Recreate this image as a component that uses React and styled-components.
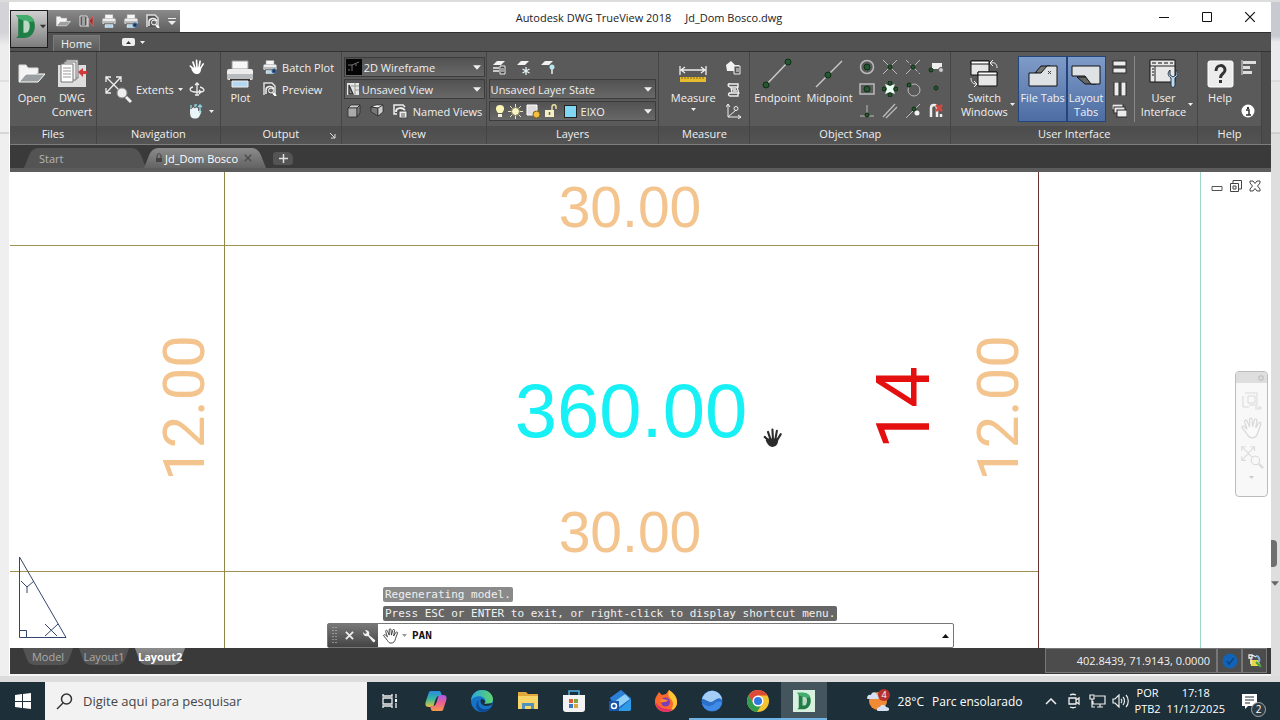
import React from "react";
import styled, { createGlobalStyle, css } from "styled-components";

/* ---------- icons ---------- */

const Svg = ({ w = 16, h = w, box, children }) => (
    <svg width={w} height={h} viewBox={box || `0 0 ${w} ${h}`} fill="none" aria-hidden="true">
        {children}
    </svg>
);

const Caret = ({ color = "#eee", w = 8 }) => (
    <Svg w={w} h={5} box="0 0 9 5">
        <path d="M0 0h9L4.500 5z" fill={color} />
    </Svg>
);

const LogoIcon = ({ size = 24 }) => (
    <Svg w={size} box="0 0 24 24">
        <path d="M3 1h8c7 0 10 5 10 10.500S18 23 10 23H3l2-2V4z" fill="#1f7d45" />
        <path d="M10 6h2c3 0 4 2.500 4 5.500S15 18 12 18h-2z" fill="#b9d9c4" />
        <path d="M3 1h8c5 0 8 2 9.500 6L15 8c-1-1.500-2-2-4-2H9L5 4z" fill="#43ad6d" />
    </Svg>
);

const FolderIcon = ({ w = 28, h = 20 }) => (
    <Svg w={w} h={h} box="0 0 28 20">
        <path d="M1 18V1h7l2 3h10v5" fill="#f4f4f4" stroke="#ddd" />
        <path d="M1 18 8 10h19l-7 8z" fill="#9aa0a2" stroke="#fff" />
    </Svg>
);

const ConvertIcon = ({ w = 30 }) => (
    <Svg w={w} box="0 0 30 30">
        <path d="M1 6h28v22H1z" fill="#dedede" />
        <path d="M9 1h12v18H9z" fill="#eee" stroke="#777" />
        <path d="M7 3h12v18H7z" fill="#eee" stroke="#777" />
        <path d="M4 5h12v18H4z" fill="#fff" stroke="#777" />
        <path d="M6 9h8M6 12h8M6 15h8M6 18h8" stroke="#999" />
        <path d="m21 13 5-4v3h4v3h-4v3z" fill="#d23a3a" />
    </Svg>
);

const ConvertSmallIcon = () => (
    <Svg w={15} h={14}>
        <path d="M1 2h7v10H1z" fill="#555" stroke="#ddd" />
        <path d="M3 4h3M3 6h3M3 8h3M3 10h3M9 4v9" stroke="#eee" />
        <path d="m10 7 4-5v10z" fill="#9d2b2b" stroke="#c66" />
    </Svg>
);

const PrinterIcon = ({ w = 28, h = w, batch }) => (
    <Svg w={w} h={h} box="0 0 28 28">
        <path d="M6 9V1h16v8z" fill="#f7f7f7" stroke="#999" />
        <rect x="1" y="9" width="26" height="11" rx="2" fill="#ededed" />
        <path d="M1 14h26v5H1z" fill="#b9bcbe" />
        <path d="M4 19h20v2H4z" fill="#333" />
        <path d="M6 21h16v6H6z" fill="#b4d8ef" stroke="#eee" />
        {batch && (
            <g>
                <circle cx="22" cy="22" r="5" fill="#3b6ea8" />
                <path d="M22 19v6M19 22h6" stroke="#223" strokeWidth="2" />
            </g>
        )}
    </Svg>
);

const PreviewIcon = () => (
    <Svg w={14} h={14}>
        <path d="M1 13V1h8l3 3v9" stroke="#ddd" fill="#555" strokeWidth="1.500" />
        <path d="M3 12V8c0-4 6-5 8-1" stroke="#eee" strokeWidth="1.500" />
        <circle cx="8" cy="8.500" r="2.500" fill="#666" stroke="#fff" />
        <path d="m10 11 3 3" stroke="#fff" strokeWidth="2" />
    </Svg>
);

const ExtentsIcon = ({ size = 28, color = "#eee", lens = color, edge = "#888" }) => (
    <Svg w={size} box="0 0 28 28">
        <path d="M2 2 16 16M17 2 2 18M2 7V2h5M12 2h5v5M2 13v5h5" stroke={color} strokeWidth="1.300" />
        <circle cx="18" cy="18" r="5" fill={lens} stroke={edge} />
        <path d="m22 22 5 5" stroke={color} strokeWidth="3" />
    </Svg>
);

const HandIcon = ({ size = 16, fill = "#fff" }) => (
    <Svg w={size} box="0 0 18 18">
        <path d="M7 13 1.500 8M7 11 4.500 3.500M9 11 8.500 1.500M11 11l1.500-8.500M12 12l4-6.500" stroke={fill} strokeWidth="1.900" strokeLinecap="round" />
        <path d="M4 9.500h9.500c.5 3-.5 7.500-5 7.500-3 0-5-3-6-6z" fill={fill} />
    </Svg>
);

const OpenHandIcon = ({ size = 16, fill = "#fff", stroke = "#333" }) => (
    <Svg w={size} box="0 0 18 18">
        <path
            d="M5 14 1 9c-1-1.500 1-2 2-1l2 2-2-6c-.5-1.500 1.500-2 2-.6L7 8V2c0-1.500 2-1.500 2 0l.5 6L11 2.500c.4-1.500 2.300-1 2 .4L12 9l2.500-4c.8-1.200 2.300-.3 1.800.8L14 12c-.6 3-2 5-5 5-2 0-3-1-4-3z"
            fill={fill}
            stroke={stroke}
        />
    </Svg>
);

const OrbitIcon = () => (
    <Svg w={16} h={14}>
        <path d="M8 1v12M6 3l2-2 2 2M4 5C0 6 0 9 5 10h7c5-1 3-4-1-5M10 8l2 2-2 2M6 13h4" stroke="#eee" strokeWidth="1.300" />
    </Svg>
);

const ViewHandIcon = () => (
    <Svg w={15} h={16}>
        <path d="M1 7c0-2 2-2 2 0V6c0-2 3-2 3 0 0-2 3-2 3 0v2c3-1 4 0 3 2l-2 4c-2 2-6 2-8 0-1-2-1-4-1-7z" fill="#e9f5f8" />
        <path d="M11 10V2M9 4l2-2 2 2M2 5V2M6 4V2h2" stroke="#8ed0df" strokeWidth="1.400" />
    </Svg>
);

const WireframeIcon = () => (
    <Svg w={16} h={16}>
        <path d="M0 0h16v16H0z" fill="#050505" />
        <path d="M2 6h4l7-3M6 6v6M10 5v2M2 11h2" stroke="#777" />
    </Svg>
);

const ViewDocIcon = () => (
    <Svg w={14} h={14}>
        <path d="M1 1h12v12H1z" fill="#e5e5e5" />
        <path d="m3 3 4 9H3z" fill="#888" stroke="#333" strokeWidth="1.300" />
        <path d="M9 1v12M5 4h8M9 8h4" stroke="#999" />
    </Svg>
);

const BoxIcon = ({ side }) => (
    <Svg w={14} h={14}>
        {side ? (
            <g stroke="#222" strokeWidth=".7">
                <path d="M1 3 6 1h7L8 4z" fill="#fff" />
                <path d="m1 3 7 1v8L1 8z" fill="#777" />
                <path d="m8 4 5-3v7l-5 4z" fill="#ccc" />
            </g>
        ) : (
            <g stroke="#222" strokeWidth=".7">
                <path d="m1 4 3-3h9l-3 3z" fill="#ccc" />
                <path d="M1 4h9v9H1z" fill="#aaa" />
                <path d="m10 4 3-3v8l-3 4z" fill="#777" />
            </g>
        )}
    </Svg>
);

const NamedViewsIcon = () => (
    <Svg w={15} h={15}>
        <path d="M4 10H1V1h9l2 2" stroke="#eee" strokeWidth="1.500" />
        <path d="M3 8c0-5 7-5 9-1" stroke="#eee" strokeWidth="2" />
        <path d="M6 7h8v7H6z" fill="#eee" stroke="#444" />
        <path d="M8 10h4M8 12h4" stroke="#555" />
    </Svg>
);

const LayerIcon = ({ kind }) => (
    <Svg w={15} h={15}>
        <path d="m1 5 4-4h8L9 5z" fill="#f2f2f2" />
        {kind === "props" && <path d="M1 8h6M1 11h6" stroke="#eee" strokeWidth="1.500" />}
        {kind === "props" && <path d="M8 6h5v8H8zM9 9h3M9 11h3" stroke="#eee" fill="#444" />}
        {kind === "freeze" && <path d="M10 7v8M6.500 9l7 4M13.500 9l-7 4" stroke="#e5f2f5" strokeWidth="1.300" />}
        {kind === "off" && <circle cx="12" cy="7" r="2.500" fill="#b9e5ee" />}
        {kind === "off" && <path d="M12 9v5" stroke="#eee" strokeWidth="1.500" />}
    </Svg>
);

const BulbIcon = () => (
    <Svg w={10} h={15}>
        <path d="M5 1c5 0 5 5 2 8H3C0 6 0 1 5 1z" fill="#fbf6b4" />
        <path d="M3 10h4v3H3z" fill="#f1eeda" />
    </Svg>
);

const SunIcon = () => (
    <Svg w={15} h={15}>
        <path d="M7.500 0v15M0 7.500h15M2 2l11 11M13 2 2 13" stroke="#e9e4b6" />
        <circle cx="7.500" cy="7.500" r="4" fill="#f7f3c7" stroke="#7d7b56" />
    </Svg>
);

const ViewportSunIcon = () => (
    <Svg w={15} h={15}>
        <path d="M1 1h10v10H1z" fill="#ddd" stroke="#fff" />
        <circle cx="10.500" cy="10.500" r="3.500" fill="#f3bf3c" stroke="#7a5d1e" />
    </Svg>
);

const UnlockIcon = () => (
    <Svg w={14} h={14}>
        <path d="M8 6V3c0-3 4-3 4 0v2" stroke="#e8dfa5" strokeWidth="1.500" />
        <path d="M1 6h9v7H1z" fill="#f5efc3" />
        <path d="M5.500 8v3" stroke="#665" strokeWidth="1.500" />
    </Svg>
);

const MeasureIcon = () => (
    <Svg w={30} h={30}>
        <path d="M2 7v9M28 7v9M3 11h24M7 8l-4 3 4 3M23 8l4 3-4 3" stroke="#eee" strokeWidth="1.300" />
        <path d="M2 18h26v5H2z" fill="#e6bd2f" />
        <path d="M4 18v2M7 18v2M10 18v2M13 18v2M16 18v2M19 18v2M22 18v2M25 18v2" stroke="#8a6b10" />
    </Svg>
);

const MeasureToolIcon = ({ kind }) => (
    <Svg w={15} h={15}>
        {kind === "id" && <path d="M0 5 5 1l4 4h4v1H9v5H1z" fill="#f2f2f2" />}
        {kind === "id" && <path d="M8 6h6v8H8zM10 9h3M10 11h3" fill="#555" stroke="#eee" />}
        {kind === "list" && (
            <path d="M2 2h10v3H4c-3-1-2-4 0-3M5 5l1 6M11 5l2 7M3 11h9v3H4c-2-1-2-3 0-3M6 7h4M7 9h4" stroke="#eee" strokeWidth="1.400" />
        )}
        {kind === "point" && <path d="M2 0v13h13M2 13l8-7M0 3l2-3 2 3M12 11l3 2-3 2" stroke="#eee" />}
        {kind === "point" && <circle cx="10" cy="4.500" r="2" stroke="#eee" />}
    </Svg>
);

const Node = ({ x, y, r = 2 }) => <circle cx={x} cy={y} r={r} fill="#25562f" stroke="#0d2e15" />;

const EndpointIcon = () => (
    <Svg w={32} h={32}>
        <path d="M5 27 27 4" stroke="#c8c8c8" strokeWidth="1.500" />
        <Node x={5} y={27} r={3} />
        <Node x={27} y={4} r={3} />
    </Svg>
);

const MidpointIcon = () => (
    <Svg w={32} h={32}>
        <path d="M3 29 29 3" stroke="#c8c8c8" strokeWidth="1.500" />
        <Node x={15} y={17} r={3} />
    </Svg>
);

const snapShapes = {
    center: <><circle cx="8" cy="8" r="6.500" stroke="#bbb" strokeWidth="1.500" /><Node x={8} y={8} r={3} /></>,
    intersection: <><path d="m1 1 14 14M15 1 1 15" stroke="#bbb" /><Node x={8} y={8} /></>,
    apparent: <><path d="m1 1 14 14" stroke="#bbb" strokeDasharray="4 2" /><path d="M15 1 1 15" stroke="#bbb" /><Node x={8} y={8} /></>,
    insert: <><path d="M4 4h10v6H4z" fill="#eee" /><Node x={3} y={11} /><circle cx="13" cy="11" r="2.500" fill="#ccc" stroke="#555" /></>,
    geometric: <><path d="M1 3h14v10H1z" stroke="#bbb" strokeWidth="1.500" /><Node x={8} y={8} r={3} /></>,
    quadrant: <><path d="m3 3 5 2 5-2-2 5 2 5-5-2-5 2 2-5z" fill="#e6fff0" /><Node x={8} y={2} /><Node x={8} y={14} /><Node x={2} y={8} /><Node x={14} y={8} /></>,
    tangent: <><circle cx="9" cy="9" r="6" stroke="#bbb" /><Node x={4} y={4} /></>,
    node: <Node x={8} y={7} />,
    perpendicular: <><path d="M1 13h14M8 2v11" stroke="#bbb" /><Node x={8} y={12} /></>,
    parallel: <path d="M1 14 13 1M4 15 15 4" stroke="#bbb" strokeWidth="1.300" />,
    nearest: <><path d="M1 15 15 1" stroke="#bbb" /><Node x={9} y={6} /><circle cx="12" cy="10" r="2.500" fill="#f2f2f2" /></>,
    none: <><path d="M3 14V5c0-4 6-4 6 0v9M13 14v-3" stroke="#eee" strokeWidth="2.500" /><path d="m8 2 6 6M14 2 8 8" stroke="#d04a40" strokeWidth="2.500" /></>,
};

const SnapIcon = ({ kind }) => <Svg w={16}>{snapShapes[kind]}</Svg>;

const SwitchIcon = () => (
    <Svg w={30} h={30}>
        <path d="M2 2h18v14H2z" fill="#e6e6e6" stroke="#111" />
        <path d="M2 2h18v3H2z" fill="#fff" stroke="#111" />
        <path d="M9 13h19v14H9z" fill="#e6e6e6" stroke="#111" />
        <path d="M9 13h19v3H9z" fill="#fff" stroke="#111" />
        <path d="M22 4c4-1 6 1 6 5M24 1l-3 3 3 3M2 19c0 4 2 6 5 6M5 22l3 3-3 3" stroke="#eee" />
    </Svg>
);

const FileTabIcon = () => (
    <Svg w={30} h={30}>
        <path d="M7 14 13 7h9l-6 8z" fill="#777" stroke="#111" />
        <path d="M1 27V14h12l6-7h10v20z" fill="#dfe2e5" stroke="#111" />
        <path d="m20 12 3 3M23 12l-3 3" stroke="#444" />
    </Svg>
);

const LayoutTabIcon = () => (
    <Svg w={30} h={30}>
        <path d="M6 18 14 25h11l3-7z" fill="#666" stroke="#111" />
        <path d="M1 7h28v18h-9l-6-8H1z" fill="#dfe2e5" stroke="#111" />
    </Svg>
);

const tileRects = {
    horizontal: [[1, 1, 13, 5], [1, 8, 13, 5]],
    vertical: [[2, 0, 5, 14], [9, 0, 5, 14]],
    cascade: [[0, 0, 11, 6], [2, 3, 11, 6], [5, 6, 10, 7]],
};

const TileIcon = ({ kind }) => (
    <Svg w={15} h={14}>
        {tileRects[kind].map(([x, y, w, h]) => (
            <rect key={`${x}-${y}`} x={x} y={y} width={w} height={h} fill="#ececec" stroke="#2a2a2a" />
        ))}
    </Svg>
);

const InterfaceIcon = () => (
    <Svg w={30} h={30}>
        <path d="M2 1h25v22H2z" fill="#e8e8e8" stroke="#111" />
        <path d="M2 7h25M7 7v16" stroke="#222" />
        <path d="M4 4h4M10 4h4M16 4h4M22 4h3M4 10h2M4 13h2M4 16h2" stroke="#555" strokeWidth="1.300" />
        <path d="M22 11v5l3 2 3-2v-5c3 3 2 6-1 8v7c0 3-4 3-4 0v-7c-3-2-4-5-1-8z" fill="#bcdcf3" stroke="#234" />
    </Svg>
);

const HelpIcon = () => (
    <Svg w={28} h={28}>
        <rect x="2" y="1" width="25" height="26" rx="2" fill="#ececec" stroke="#fff" />
        <path d="M10 11c0-7 9-7 9-1 0 4-4.500 3-4.500 8" stroke="#333" strokeWidth="3" />
        <path d="M13 20h3v3h-3z" fill="#333" />
    </Svg>
);

const InfoIcon = () => (
    <Svg w={14} h={14}>
        <circle cx="7" cy="7" r="6.500" fill="#fff" />
        <path d="M5 6h3v5M5 11h5" stroke="#333" strokeWidth="1.500" />
        <path d="M6 3h2v2H6z" fill="#333" />
    </Svg>
);

const BarsIcon = () => (
    <Svg w={15} h={15}>
        <path d="M1 0v15" stroke="#ddd" />
        <path d="M2 1h13v3H2zM2 6h7v3H2zM2 11h9v3H2z" fill="#ddd" />
    </Svg>
);

const WrenchIcon = () => (
    <Svg w={14} h={14}>
        <path d="M1 3c0 4 3 5 5 4l5 6c1 1 3-1 2-2L7 6c1-2 0-5-4-5l2 3-2 1z" fill="#f2f2f2" />
    </Svg>
);

const LockIcon = () => (
    <Svg w={8} h={10}>
        <path d="M2 5V3c0-3 4-3 4 0v2" stroke="#444" />
        <path d="M1 5h6v4H1z" fill="#444" />
    </Svg>
);

const Cross = ({ size = 10, color = "#eee", weight = 2 }) => (
    <Svg w={size} box="0 0 10 10">
        <path d="m1 1 8 8M9 1 1 9" stroke={color} strokeWidth={weight} />
    </Svg>
);

/* ---------- taskbar icons ---------- */

const WindowsIcon = () => (
    <Svg w={16} h={16}>
        <path d="m0 2 7-1v7H0zM8 1l8-1v8H8zM0 9h7v6l-7-1zM8 9h8v7l-8-1z" fill="#fff" />
    </Svg>
);

const SearchIcon = () => (
    <Svg w={17} h={17}>
        <circle cx="10.500" cy="6" r="5" stroke="#333" strokeWidth="1.500" />
        <path d="m7 10-6 6" stroke="#333" strokeWidth="1.500" />
    </Svg>
);

const TaskViewIcon = () => (
    <Svg w={16} h={16}>
        <path d="M1 1v2h9V1M1 5h9v6H1zM1 15v-2h9v2M14 1v4M14 10v5" stroke="#eee" strokeWidth="1.300" />
        <path d="M13 6h2v3h-2z" fill="#fff" />
    </Svg>
);

const CopilotIcon = () => (
    <Svg w={22} h={22}>
        <defs>
            <linearGradient id="copA" x1="0" y1="0" x2="0" y2="1">
                <stop offset="0" stopColor="#2a8be0" />
                <stop offset=".5" stopColor="#35b8a0" />
                <stop offset="1" stopColor="#e6c63a" />
            </linearGradient>
            <linearGradient id="copB" x1="0" y1="0" x2="0" y2="1">
                <stop offset="0" stopColor="#a65ce8" />
                <stop offset=".5" stopColor="#ee5f8e" />
                <stop offset="1" stopColor="#f79a4a" />
            </linearGradient>
        </defs>
        <path d="M6 1h8c2 0 2 2 3 5h-3c-2 0-3 2-4 5s-1 6-4 6H4c-4 0-4-3-3-6l2-6c1-3 1-4 3-4z" fill="url(#copA)" />
        <path d="M16 21H8c-2 0-2-2-3-5h3c2 0 3-2 4-5s1-6 4-6h2c4 0 4 3 3 6l-2 6c-1 3-1 4-3 4z" fill="url(#copB)" />
    </Svg>
);

const EdgeIcon = () => (
    <Svg w={24} h={24}>
        <defs>
            <linearGradient id="edgeTop" x1="0" y1="0" x2="1" y2="0">
                <stop offset="0" stopColor="#2aa5e0" />
                <stop offset="1" stopColor="#5fd56a" />
            </linearGradient>
        </defs>
        <circle cx="12" cy="12" r="11" fill="#1574c8" />
        <path d="M1 11C2 4 7 1 12 1c7 0 11 5 11 9 0 5-5 6-9 5 2-1 2-4 0-6-3-3-10-2-13 2z" fill="url(#edgeTop)" />
        <path d="M9 11c-3 6 3 12 11 8-2 3-5 4-8 4-6-1-8-8-3-12z" fill="#0d4a94" />
        <path d="M11 10c-2 4 2 9 10 6l2-2-9 1c2-2 1-5-3-5z" fill="#1b2f3b" />
    </Svg>
);

const ExplorerIcon = () => (
    <Svg w={22} h={20}>
        <path d="M1 3V1h8l2 2h10v4H1z" fill="#e2a93a" />
        <path d="M1 5h20v13H1z" fill="#f8d568" />
        <path d="M5 18v-6h12v6h-3v-3H8v3z" fill="#4f93bd" />
    </Svg>
);

const StoreIcon = () => (
    <Svg w={24} h={24}>
        <path d="M7 6V2h10v4" stroke="#4fb0e2" strokeWidth="1.500" />
        <path d="M1 6h22v14c0 2-1 3-3 3H4c-2 0-3-1-3-3z" fill="#f3f3f3" />
        <path d="M7 10h4v4H7z" fill="#e25b39" />
        <path d="M12 10h4v4h-4z" fill="#7fa63b" />
        <path d="M7 15h4v4H7z" fill="#3b78c8" />
        <path d="M12 15h4v4h-4z" fill="#dda83a" />
    </Svg>
);

const OutlookIcon = () => (
    <Svg w={24} h={24}>
        <path d="M2 9 13 1l10 8v11c0 1-1 2-2 2H7z" fill="#2369c4" />
        <path d="m7 11 10-6 5 5-11 8z" fill="#8fd0f6" />
        <path d="M7 22c4-1 9-6 16-12v10c0 1-1 2-2 2z" fill="#2f9be6" />
        <path d="M2 9 13 1l4 4-11 8z" fill="#2b7fd6" />
        <path d="M1 12h10v10H1z" fill="#1556ab" />
        <circle cx="6" cy="17" r="2.500" stroke="#fff" strokeWidth="1.500" />
    </Svg>
);

const FirefoxIcon = () => (
    <Svg w={24} h={24}>
        <path d="M2 8 5 3l3 3 4-1 3-4c6 4 8 8 8 12 0 6-5 10-11 10S1 19 1 13c0-2 0-3 1-5z" fill="#fb6a2c" />
        <path d="M15 1c6 4 8 8 8 12 0 5-3 8-7 9 4-5 4-9 0-13-2-2-2-5-1-8z" fill="#fcc735" />
        <path d="M2 14c0 5 5 9 10 9 3 0 5-1 7-3-7 1-13-1-17-6z" fill="#e4316c" />
        <circle cx="11.500" cy="13" r="4.500" fill="#7a3fb8" />
        <path d="M6 11c3-2 5 0 8 0-2 3-5 1-6 3z" fill="#fb8b2c" />
    </Svg>
);

const EarthIcon = () => (
    <Svg w={22} h={22}>
        <circle cx="11" cy="11" r="10.500" fill="#2b70c9" />
        <path d="M1 9C3 3 8 0 13 1c5 1 8 5 8 9-4-5-8 3-12 2-3-1-5-3-8-3z" fill="#a6cdf6" />
        <path d="M1 13c5 4 9 4 12 1s6-3 8-1c-1 5-5 8-10 8S2 18 1 13z" fill="#3f8be6" />
    </Svg>
);

const ChromeIcon = () => (
    <Svg w={24} h={24}>
        <circle cx="12" cy="12" r="11" fill="#f3c332" />
        <path d="M2.500 6.500A11 11 0 0 1 21.500 6.500H12l-4.500 8z" fill="#dd4a3a" />
        <path d="M2.500 6.500 8 15l8 0-5 8A11 11 0 0 1 2.500 6.500z" fill="#2f9c4f" />
        <circle cx="12" cy="12" r="5.500" fill="#fff" />
        <circle cx="12" cy="12" r="4" fill="#2f78e0" />
    </Svg>
);

const TrueViewIcon = () => (
    <LogoTile>
        <LogoIcon size={18} />
    </LogoTile>
);

const WeatherIcon = () => (
    <Svg w={24} h={24}>
        <circle cx="12" cy="12" r="9" fill="#f08a34" />
        <path d="M1 9c0-3 3-4 4-3 1-4 6-3 6 0 3 0 3 4 0 4H3C2 10 1 10 1 9zM11 21c0-3 2-3 3-3 1-3 5-3 6 0 4 0 4 4 1 4h-8c-1 0-2 0-2-1z" fill="#d6e0f4" />
        <circle cx="18" cy="6" r="6" fill="#b8322c" />
    </Svg>
);

const MeetIcon = () => (
    <Svg w={14} h={16}>
        <path d="M2 5h7v6H2zM9 7l3-2v6L9 9M3 2c2-1 4-1 6 0M3 14c2 1 4 1 6 0" stroke="#eee" strokeWidth="1.300" />
    </Svg>
);

const NetworkIcon = () => (
    <Svg w={17} h={15}>
        <path d="M6 2h10v8H4V7M8 13h6M11 10v3M1 1h4v4H1zM3 5v8h3" stroke="#eee" strokeWidth="1.200" />
    </Svg>
);

const SpeakerIcon = () => (
    <Svg w={17} h={14}>
        <path d="M1 5h2l4-4v12L3 9H1zM9 5c1 1 1 3 0 4M11 3c2 2 2 6 0 8M14 1c3 3 3 9 0 12" stroke="#eee" strokeWidth="1.200" />
    </Svg>
);

const NoteIcon = () => (
    <Svg w={17} h={17}>
        <path d="M1 1h15v12H7l-3 3v-3H1z" fill="#fff" />
        <path d="M4 4h9M4 7h9M4 10h5" stroke="#1f2f39" />
    </Svg>
);

/* ---------- small shared pieces ---------- */

const LargeTool = ({ icon, label, drop, active }) => (
    <LargeButton type="button" $active={active}>
        <IconSlot>{icon}</IconSlot>
        {label.split("|").map((line) => (
            <span key={line}>{line}</span>
        ))}
        {drop === "below" && <DropBelow><Caret w={5} /></DropBelow>}
    </LargeButton>
);

const Tool = ({ icon, name, label, drop }) => (
    <SmallButton type="button" aria-label={name || label}>
        {icon}
        {label}
        {drop && <Caret w={5} />}
    </SmallButton>
);

const Combo = ({ name, value, icons }) => (
    <ComboBox>
        {icons}
        <ComboSelect aria-label={name} defaultValue={value}>
            <option>{value}</option>
        </ComboSelect>
        <ComboArrow><Caret /></ComboArrow>
    </ComboBox>
);

const Group = ({ title, launcher, inset, children }) => (
    <Panel>
        <PanelBody $inset={inset}>{children}</PanelBody>
        <PanelTitle>
            {title}
            {launcher && (
                <Launcher type="button" aria-label="Plot options">
                    <Svg w={6} h={6}><path d="m0 0 5 5M5 1v4H1" stroke="#ddd" /></Svg>
                </Launcher>
            )}
        </PanelTitle>
    </Panel>
);

const snaps = [
    "center", "intersection", "apparent", "insert",
    "geometric", "quadrant", "tangent", "node",
    "perpendicular", "parallel", "nearest", "none",
];

const pinned = [
    { name: "Task View", Icon: TaskViewIcon },
    { name: "Copilot", Icon: CopilotIcon },
    { name: "Microsoft Edge", Icon: EdgeIcon },
    { name: "File Explorer", Icon: ExplorerIcon },
    { name: "Microsoft Store", Icon: StoreIcon },
    { name: "Outlook", Icon: OutlookIcon },
    { name: "Firefox", Icon: FirefoxIcon },
    { name: "Google Earth", Icon: EarthIcon, running: true },
    { name: "Google Chrome", Icon: ChromeIcon, running: true },
    { name: "DWG TrueView", Icon: TrueViewIcon, running: true, active: true },
];

function Ribbon() {
    return (
        <RibbonBar>
            <Group title="Files" inset>
                <LargeTool icon={<FolderIcon />} label="Open" />
                <LargeTool icon={<ConvertIcon />} label="DWG|Convert" />
            </Group>
            <Group title="Navigation" inset>
                <ExtentsButton type="button">
                    <ExtentsIcon />
                    Extents
                    <Caret w={5} />
                </ExtentsButton>
                <Stack>
                    <Tool name="Pan" icon={<HandIcon />} />
                    <Tool name="Orbit" icon={<OrbitIcon />} />
                    <Tool name="View" icon={<ViewHandIcon />} drop />
                </Stack>
            </Group>
            <Group title="Output" launcher>
                <LargeTool icon={<PrinterIcon />} label="Plot" />
                <Stack>
                    <Tool icon={<PrinterIcon w={14} batch />} label="Batch Plot" />
                    <Tool icon={<PreviewIcon />} label="Preview" />
                </Stack>
            </Group>
            <Group title="View">
                <Stack $grow>
                    <Combo name="Visual style" value="2D Wireframe" icons={<WireframeIcon />} />
                    <Combo name="Saved view" value="Unsaved View" icons={<ViewDocIcon />} />
                    <ToolRow>
                        <Tool name="Front view" icon={<BoxIcon />} />
                        <Tool name="Side view" icon={<BoxIcon side />} />
                        <Tool icon={<NamedViewsIcon />} label="Named Views" />
                    </ToolRow>
                </Stack>
            </Group>
            <Group title="Layers">
                <Stack $grow>
                    <ToolRow>
                        <Tool name="Layer properties" icon={<LayerIcon kind="props" />} />
                        <Tool name="Freeze layer" icon={<LayerIcon kind="freeze" />} />
                        <Tool name="Layer off" icon={<LayerIcon kind="off" />} />
                    </ToolRow>
                    <Combo name="Layer state" value="Unsaved Layer State" />
                    <Combo
                        name="Layer"
                        value="EIXO"
                        icons={
                            <LayerFlags>
                                <BulbIcon />
                                <SunIcon />
                                <ViewportSunIcon />
                                <UnlockIcon />
                                <Swatch />
                            </LayerFlags>
                        }
                    />
                </Stack>
            </Group>
            <Group title="Measure" inset>
                <LargeTool icon={<MeasureIcon />} label="Measure" drop="below" />
                <Stack>
                    <Tool name="ID point" icon={<MeasureToolIcon kind="id" />} />
                    <Tool name="List" icon={<MeasureToolIcon kind="list" />} />
                    <Tool name="Locate point" icon={<MeasureToolIcon kind="point" />} />
                </Stack>
            </Group>
            <Group title="Object Snap">
                <LargeTool icon={<EndpointIcon />} label="Endpoint" />
                <LargeTool icon={<MidpointIcon />} label="Midpoint" />
                <SnapGrid>
                    {snaps.map((kind) => (
                        <Tool key={kind} name={kind} icon={<SnapIcon kind={kind} />} />
                    ))}
                </SnapGrid>
            </Group>
            <Group title="User Interface" inset>
                <ToolPair>
                    <LargeTool icon={<SwitchIcon />} label="Switch|Windows" />
                    <SideCaret><Caret w={5} /></SideCaret>
                </ToolPair>
                <ToolPair>
                    <LargeTool icon={<FileTabIcon />} label="File Tabs" active />
                    <LargeTool icon={<LayoutTabIcon />} label="Layout|Tabs" active />
                </ToolPair>
                <Stack>
                    <Tool name="Tile horizontally" icon={<TileIcon kind="horizontal" />} />
                    <Tool name="Tile vertically" icon={<TileIcon kind="vertical" />} />
                    <Tool name="Cascade" icon={<TileIcon kind="cascade" />} />
                </Stack>
                <Divider />
                <ToolPair>
                    <LargeTool icon={<InterfaceIcon />} label="User|Interface" />
                    <SideCaret><Caret w={5} /></SideCaret>
                </ToolPair>
            </Group>
            <Group title="Help" inset>
                <LargeTool icon={<HelpIcon />} label="Help" />
                <Stack $spread>
                    <Tool name="Performance" icon={<BarsIcon />} />
                    <Tool name="About" icon={<InfoIcon />} />
                </Stack>
            </Group>
        </RibbonBar>
    );
}

function Drawing() {
    return (
        <Sheet viewBox="10 172 1261 476" preserveAspectRatio="xMinYMin slice">
            <g shapeRendering="crispEdges" strokeWidth="1">
                <path d="M10 245.500H1038M10 571.500H1038" stroke="#a0914f" />
                <path d="M224.500 172V648" stroke="#8f8748" />
                <path d="M1038.500 172V648" stroke="#6b3434" />
                <path d="M1200.500 172V648" stroke="#9fd8c2" />
            </g>
            <g fill="#f3c48d" fontSize="57" textAnchor="middle">
                <text x="630" y="227">30.00</text>
                <text x="630" y="552">30.00</text>
            </g>
            <text x="631" y="437" fill="#17f0f4" fontSize="76" textAnchor="middle">360.00</text>
            <g fontFamily="Roboto, sans-serif" textAnchor="middle">
                <g fill="#f3c48d" fontSize="58">
                    <text transform="translate(204 408) rotate(-90)">12.00</text>
                    <text transform="translate(1018 408) rotate(-90)">12.00</text>
                </g>
                <text transform="translate(929 408) rotate(-90)" fill="#e41010" fontSize="74">14</text>
            </g>
            <path
                d="M19.500 557V637.500H66zM19.500 630.500h7v7M21 581l6 6 7-6M27 587v6M45 624l12 12M58 624 45 636"
                fill="none"
                stroke="#34466e"
            />
        </Sheet>
    );
}

function CommandLine() {
    return (
        <CommandDock>
            <Message>Regenerating model.</Message>
            <Message $solid>Press ESC or ENTER to exit, or right-click to display shortcut menu.</Message>
            <CommandBar>
                <CommandGrip>
                    <Svg w={5} h={18}>
                        <path d="M1 0v18M4 0v18" stroke="#ccc" strokeDasharray="1 2" />
                    </Svg>
                    <PlainButton type="button" aria-label="Close command line"><Cross size={9} /></PlainButton>
                    <PlainButton type="button" aria-label="Customize"><WrenchIcon /></PlainButton>
                </CommandGrip>
                <OpenHandIcon />
                <Caret color="#999" w={5} />
                <CommandInput aria-label="Command" defaultValue="PAN" />
                <PlainButton type="button" aria-label="History">
                    <Svg w={7} h={4}><path d="M0 4h7L3.500 0z" fill="#111" /></Svg>
                </PlainButton>
            </CommandBar>
        </CommandDock>
    );
}

function Taskbar() {
    return (
        <TaskbarRow>
            <StartButton type="button" aria-label="Start"><WindowsIcon /></StartButton>
            <SearchBox>
                <SearchIcon />
                <SearchInput aria-label="Search" placeholder="Digite aqui para pesquisar" />
            </SearchBox>
            {pinned.map(({ name, Icon, running, active }) => (
                <TaskButton key={name} type="button" aria-label={name} $running={running} $active={active}>
                    <Icon />
                </TaskButton>
            ))}
            <Tray>
                <Weather type="button">
                    <WeatherBadge>
                        <WeatherIcon />
                        <i>4</i>
                    </WeatherBadge>
                    <span>28°C</span>
                    <span>Parc ensolarado</span>
                </Weather>
                <TrayButton type="button" aria-label="Hidden icons">
                    <Svg w={12} h={7}><path d="m1 6 5-5 5 5" stroke="#eee" strokeWidth="1.500" /></Svg>
                </TrayButton>
                <TrayButton type="button" aria-label="Meet"><MeetIcon /></TrayButton>
                <TrayButton type="button" aria-label="Network"><NetworkIcon /></TrayButton>
                <TrayButton type="button" aria-label="Volume"><SpeakerIcon /></TrayButton>
                <TrayText><span>POR</span><span>PTB2</span></TrayText>
                <TrayText><span>17:18</span><span>11/12/2025</span></TrayText>
                <Notice type="button" aria-label="Notifications">
                    <NoteIcon />
                    <i>2</i>
                </Notice>
            </Tray>
        </TaskbarRow>
    );
}

const App = () => {
    return (
        <Desktop>
            <GlobalStyle />
            <Workspace>
                <EdgeStrip />
                <Window>
                    <TitleBar>
                        <QuickAccess>
                            <PlainButton type="button" aria-label="Open"><FolderIcon w={15} h={11} /></PlainButton>
                            <PlainButton type="button" aria-label="DWG Convert"><ConvertSmallIcon /></PlainButton>
                            <PlainButton type="button" aria-label="Plot"><PrinterIcon w={14} /></PlainButton>
                            <PlainButton type="button" aria-label="Batch Plot"><PrinterIcon w={14} batch /></PlainButton>
                            <PlainButton type="button" aria-label="Preview"><PreviewIcon /></PlainButton>
                            <PlainButton type="button" aria-label="More">
                                <Svg w={8} h={7}><path d="M0 0h8v1H0zM0 3h8L4 7z" fill="#eee" /></Svg>
                            </PlainButton>
                        </QuickAccess>
                        <Caption>
                            <span>Autodesk DWG TrueView 2018</span>
                            <span>Jd_Dom Bosco.dwg</span>
                        </Caption>
                        <WindowButton type="button" aria-label="Minimize">
                            <Svg w={10} h={10}><path d="M0 5.500h10" stroke="#111" /></Svg>
                        </WindowButton>
                        <WindowButton type="button" aria-label="Maximize">
                            <Svg w={10} h={10}><path d="M.5.500h9v9h-9z" stroke="#111" /></Svg>
                        </WindowButton>
                        <WindowButton type="button" aria-label="Close"><Cross size={12} color="#111" weight={1} /></WindowButton>
                    </TitleBar>
                    <AppButton type="button" aria-label="Application menu">
                        <LogoIcon size={25} />
                        <Caret w={6} color="#333" />
                    </AppButton>
                    <RibbonTabs>
                        <RibbonTab type="button">Home</RibbonTab>
                        <PlainButton type="button" aria-label="Minimize ribbon">
                            <Svg w={13} h={8}>
                                <rect width="13" height="8" rx="2" fill="#eee" />
                                <path d="M4 6h5L6.500 3z" fill="#333" />
                            </Svg>
                            <Caret w={5} />
                        </PlainButton>
                    </RibbonTabs>
                    <Ribbon />
                    <FileTabs>
                        <FileTab type="button">Start</FileTab>
                        <FileTab type="button" $active>
                            <LockIcon />
                            Jd_Dom Bosco
                            <CloseMark><Cross size={8} color="#4e4e4e" /></CloseMark>
                        </FileTab>
                        <AddTab type="button" aria-label="New tab">
                            <Svg w={9} h={9}><path d="M4.500 0v9M0 4.500h9" stroke="#ddd" strokeWidth="1.500" /></Svg>
                        </AddTab>
                    </FileTabs>
                    <Canvas>
                        <Drawing />
                        <SheetControls>
                            <Svg w={12} h={12}><path d="M1 6.500h10v4H1z" stroke="#555" /></Svg>
                            <Svg w={12} h={12}>
                                <path d="M3 3V.500h8.500V9H9M.500 3.500h8v8h-8z" stroke="#444" />
                                <path d="M3 6h3v3H3z" stroke="#444" />
                            </Svg>
                            <Svg w={12} h={12}>
                                <path d="M1 1h3l2 2.500L8 1h3v2L8.500 6 11 9v2H8L6 8.500 4 11H1V9l2.500-3L1 3z" stroke="#444" />
                            </Svg>
                        </SheetControls>
                        <PanCursor><HandIcon size={20} fill="#2b2b2b" /></PanCursor>
                        <NavBar>
                            <NavCap><Svg w={6} h={6}><path d="M1 1h4v4H1z" stroke="#bbb" /></Svg></NavCap>
                            <Svg w={22} h={22}>
                                <path d="M4 4h12v12H8M2 7v11h6M7 7h7v7H7zM14 18h6v2h-6" stroke="#d9d9d9" />
                            </Svg>
                            <OpenHandIcon size={22} fill="#fafafa" stroke="#d9d9d9" />
                            <ExtentsIcon size={24} color="#dcdcdc" lens="#f8f8f8" edge="#d0d0d0" />
                            <Caret w={5} color="#ccc" />
                        </NavBar>
                        <CommandLine />
                    </Canvas>
                    <StatusBar>
                        <LayoutTab type="button">Model</LayoutTab>
                        <LayoutTab type="button">Layout1</LayoutTab>
                        <LayoutTab type="button" $active>Layout2</LayoutTab>
                        <StatusCells>
                            <Coordinates>402.8439, 71.9143, 0.0000</Coordinates>
                            <StatusCell type="button" aria-label="Graphics performance">
                                <Svg w={16} h={16}>
                                    <circle cx="8" cy="8" r="7.500" fill="#1263b5" />
                                    <path d="m5 8 2 3 5-6" stroke="#0b4585" strokeWidth="1.500" />
                                </Svg>
                            </StatusCell>
                            <StatusCell type="button" aria-label="Status options">
                                <Svg w={15} h={15}>
                                    <path d="M3 7h8l3 6H4z" fill="#e3d84c" />
                                    <path d="M9 3c3 0 4 3 3 6" stroke="#7fb6e8" strokeWidth="2" />
                                    <path d="m9 9 5 5" stroke="#3da147" strokeWidth="2" />
                                    <path d="M2 2h3v3H2zM4 5v6M5 2l4 2" stroke="#eee" strokeWidth="1.300" />
                                </Svg>
                            </StatusCell>
                        </StatusCells>
                    </StatusBar>
                </Window>
                <EdgeStrip $right>
                    <ScrollThumb />
                    <Caret w={8} color="#666" />
                </EdgeStrip>
            </Workspace>
            <Taskbar />
        </Desktop>
    );
};

export default App;

/* ---------- styles ---------- */

const GlobalStyle = createGlobalStyle`
    *, *::before, *::after {
        box-sizing: border-box;
    }
    body {
        margin: 0;
        font-family: "Open Sans", "Noto Sans", sans-serif;
        font-size: 11px;
        color: #f0f0f0;
    }
    button, input, select {
        font: inherit;
        color: inherit;
        margin: 0;
    }
    button {
        padding: 0;
        border: none;
        background: none;
    }
    svg {
        display: block;
        flex: none;
    }
`;

const Desktop = styled.div`
    display: flex;
    flex-direction: column;
    min-height: 100vh;
    background: #dcdcdc;
`;

const Workspace = styled.div`
    flex: 1;
    display: grid;
    grid-template-columns: 9px minmax(0, 1fr) 9px;
    padding: 2px 0 6px;
`;

const EdgeStrip = styled.div`
    display: flex;
    flex-direction: column;
    justify-content: flex-end;
    gap: 14px;
    padding-bottom: 90px;
    background: linear-gradient(#d3d3d8 0 30px, #ededed 44px 78px, #d0d0d0 79px, #f0f0f0 80px 130px, #bdbdbd 131px, #efefef 132px);
    ${({ $right }) => $right && css`
        background: linear-gradient(#c9c9d2 0 34px, #e9e9ee 40px 78px, #d0d0d0 79px, #e6e6e6 80px 130px, #bdbdbd 131px, #dedede 132px);
    `}
`;

const ScrollThumb = styled.div`
    width: 6px;
    height: 27px;
    border-radius: 0 4px 4px 0;
    background: #6f6f6f;
`;

const Window = styled.div`
    position: relative;
    display: flex;
    flex-direction: column;
    border-left: 1px solid #fff;
    border-bottom: 2px solid #f4f4f4;
    background: #3a3a3a;
`;

const PlainButton = styled.button`
    display: flex;
    align-items: center;
    gap: 5px;
`;

const TitleBar = styled.header`
    display: flex;
    align-items: stretch;
    height: 30px;
    background: #fff;
    color: #222;
`;

const QuickAccess = styled.div`
    display: flex;
    align-items: center;
    justify-content: space-between;
    width: 170px;
    margin-top: 8px;
    padding: 0 4px 0 46px;
    background: linear-gradient(#8a8a8a, #5f5f5f);
`;

const Caption = styled.div`
    flex: 1;
    display: flex;
    align-items: center;
    justify-content: center;
    gap: 14px;
    padding-right: 24px;
`;

const WindowButton = styled.button`
    display: flex;
    align-items: center;
    justify-content: center;
    width: 43px;
`;

/* sits across the title bar and the tab row */
const AppButton = styled.button`
    position: absolute;
    top: 8px;
    left: 0;
    display: flex;
    align-items: center;
    gap: 2px;
    width: 38px;
    height: 38px;
    padding: 0 2px 6px;
    border: 1px solid #1c1c1c;
    background: linear-gradient(#d0d0d0, #7d7d7d);
`;

const RibbonTabs = styled.nav`
    display: flex;
    align-items: flex-end;
    gap: 22px;
    height: 19px;
    padding-left: 43px;
    border-top: 1px solid #2f2f2f;
    background: #525252;
    ${PlainButton} {
        height: 18px;
    }
`;

const RibbonTab = styled.button`
    width: 47px;
    height: 16px;
    border: 1px solid #7a7a7a;
    border-bottom: none;
    background: linear-gradient(#747474, #5c5c5c);
    line-height: 12px;
`;

const RibbonBar = styled.div`
    display: grid;
    grid-template-columns: 87fr 124fr 121fr 145fr 173fr 91fr 201fr 247fr 64fr;
    padding-right: 9px;
    border-top: 1px solid #333;
    border-bottom: 1px solid #7d7d7d;
    background: #4c4c4c;
`;

const Panel = styled.section`
    display: flex;
    flex-direction: column;
    min-width: 0;
    border-right: 1px solid #444;
    background: #5a5a5a;
    white-space: nowrap;
`;

const PanelBody = styled.div`
    display: flex;
    justify-content: space-evenly;
    height: 74px;
    padding: ${({ $inset }) => ($inset ? "4px 0 4px 4px" : "4px 0")};
`;

const PanelTitle = styled.div`
    position: relative;
    height: 18px;
    background: linear-gradient(#4c4c4c, #545454);
    line-height: 16px;
    text-align: center;
`;

const Launcher = styled.button`
    position: absolute;
    right: 5px;
    bottom: 5px;
`;

const LargeButton = styled.button`
    display: flex;
    flex-direction: column;
    align-items: center;
    height: 66px;
    padding: 2px 2px 0;
    line-height: 14px;
    ${({ $active }) => $active && css`
        border: 1px solid #24457c;
        background: linear-gradient(#7f9bc8, #4d6da3);
        padding: 1px 1px 0;
    `}
`;

const ToolPair = styled.div`
    display: flex;
`;

const IconSlot = styled.span`
    display: flex;
    align-items: center;
    height: 32px;
    margin-bottom: 1px;
`;

const DropBelow = styled.span`
    padding-top: 2px;
`;

const SideCaret = styled.span`
    align-self: center;
    padding-top: 30px;
`;

const Stack = styled.div`
    display: flex;
    flex-direction: column;
    ${({ $grow }) => $grow && css`
        flex: 1;
        padding: 0 2px;
    `}
    ${({ $spread }) => $spread && css`
        justify-content: space-between;
    `}
`;

const SmallButton = styled.button`
    display: flex;
    align-items: center;
    gap: 5px;
    height: 22px;
    padding: 0 3px;
`;

const ToolRow = styled.div`
    display: flex;
    gap: 3px;
`;

const SnapGrid = styled.div`
    display: grid;
    grid-template-columns: repeat(4, 23px);
    grid-auto-rows: 22px;
`;

const ExtentsButton = styled.button`
    display: flex;
    align-items: center;
    gap: 4px;
`;

const Divider = styled.div`
    width: 1px;
    background: #888;
`;

const ComboBox = styled.div`
    display: flex;
    align-items: center;
    gap: 2px;
    height: 20px;
    margin: 1px 0;
    padding: 0 3px 0 1px;
    border: 1px solid #3c3c3c;
    background: linear-gradient(#525252, #686868);
`;

const ComboSelect = styled.select`
    flex: 1;
    min-width: 0;
    padding: 0;
    border: none;
    background: none;
    appearance: none;
`;

const ComboArrow = styled.span`
    pointer-events: none;
`;

const LayerFlags = styled.span`
    display: flex;
    align-items: center;
    gap: 3px;
    padding: 0 1px 0 4px;
`;

const Swatch = styled.span`
    width: 13px;
    height: 13px;
    margin: 0 1px 0 3px;
    border: 1px solid #222;
    background: #7fd7f4;
`;

const FileTabs = styled.nav`
    display: flex;
    align-items: flex-end;
    gap: 6px;
    height: 27px;
    padding-left: 18px;
    border-bottom: 4px solid #5c5c5c;
    background: #3a3a3a;
`;

/* two overlapping halves lean away from each other to make a tab with slanted sides */
const slanted = css`
    position: relative;
    z-index: 0;
    &::before,
    &::after {
        content: "";
        position: absolute;
        z-index: -1;
        top: 0;
        bottom: 0;
        background: ${({ $active }) => ($active ? "linear-gradient(#8c8c8c, #636363)" : "#545454")};
    }
    &::before {
        left: 0;
        right: 30%;
    }
    &::after {
        left: 30%;
        right: 0;
    }
`;

const FileTab = styled.button`
    ${slanted}
    display: flex;
    align-items: center;
    gap: 2px;
    width: 114px;
    height: 20px;
    padding-left: ${({ $active }) => ($active ? "7px" : "11px")};
    color: ${({ $active }) => ($active ? "#fff" : "#b4b4b4")};
    white-space: nowrap;
    &::before {
        border-radius: 6px 0 0 0;
        transform: skewX(-22deg);
    }
    &::after {
        border-radius: 0 6px 0 0;
        transform: skewX(22deg);
    }
`;

const CloseMark = styled.span`
    margin-left: auto;
    padding-right: 10px;
`;

const AddTab = styled.button`
    display: flex;
    align-items: center;
    justify-content: center;
    width: 20px;
    height: 13px;
    margin: 0 0 3px 5px;
    border-radius: 3px 6px 3px 3px;
    background: #545454;
`;

const Canvas = styled.main`
    position: relative;
    flex: 1;
    min-height: 300px;
    background: #fff;
    overflow: hidden;
`;

const Sheet = styled.svg`
    position: absolute;
    inset: 0;
    width: 100%;
    height: 100%;
    font-family: "Liberation Sans", Arial, sans-serif;
`;

const SheetControls = styled.div`
    position: absolute;
    top: 8px;
    right: 10px;
    display: flex;
    gap: 7px;
`;

const PanCursor = styled.div`
    position: absolute;
    top: 256px;
    left: 753px;
`;

const NavBar = styled.div`
    position: absolute;
    top: 199px;
    right: 3px;
    display: flex;
    flex-direction: column;
    align-items: center;
    gap: 6px;
    width: 33px;
    height: 126px;
    border: 1px solid #bcbcbc;
    border-radius: 4px;
    background: #f8f8f8;
`;

const NavCap = styled.div`
    display: flex;
    align-items: center;
    justify-content: flex-end;
    width: 100%;
    height: 11px;
    padding-right: 3px;
    border-radius: 3px 3px 0 0;
    background: #dedede;
`;

const CommandDock = styled.div`
    position: absolute;
    left: 317px;
    right: 317px;
    bottom: 0;
    display: flex;
    flex-direction: column;
    align-items: flex-start;
    gap: 4px;
    font-family: "DejaVu Sans Mono", monospace;
`;

const Message = styled.div`
    margin-left: 56px;
    padding: 0 2px;
    border-radius: 2px;
    background: ${({ $solid }) => ($solid ? "#666" : "#8a8a8a")};
    line-height: 15px;
    white-space: nowrap;
`;

const CommandBar = styled.div`
    display: flex;
    align-items: center;
    gap: 3px;
    width: 100%;
    height: 25px;
    margin-top: -2px;
    padding-right: 4px;
    border: 1px solid #777;
    border-radius: 2px;
    background: #fff;
`;

const CommandGrip = styled.div`
    display: flex;
    align-items: center;
    gap: 8px;
    width: 50px;
    height: 100%;
    margin-right: 2px;
    padding: 0 4px;
    background: linear-gradient(#777, #444);
`;

const CommandInput = styled.input`
    flex: 1;
    min-width: 0;
    padding: 0 2px;
    border: none;
    background: none;
    color: #111;
    font-weight: 700;
`;

const StatusBar = styled.footer`
    display: flex;
    align-items: flex-start;
    gap: 12px;
    height: 26px;
    padding: 0 4px 0 16px;
    background: #3a3a3a;
`;

const LayoutTab = styled.button`
    ${slanted}
    width: 44px;
    height: 17px;
    line-height: 16px;
    color: ${({ $active }) => ($active ? "#fff" : "#aaa")};
    font-weight: ${({ $active }) => ($active ? 700 : 400)};
    white-space: nowrap;
    &::before {
        border-radius: 0 0 0 5px;
        transform: skewX(20deg);
    }
    &::after {
        border-radius: 0 0 5px 0;
        transform: skewX(-20deg);
    }
`;

const StatusCells = styled.div`
    display: flex;
    height: 25px;
    margin-left: auto;
`;

const Coordinates = styled.div`
    width: 172px;
    padding-right: 6px;
    border: 1px solid #777;
    background: #4c4c4c;
    line-height: 23px;
    text-align: right;
    white-space: nowrap;
`;

const StatusCell = styled.button`
    display: flex;
    align-items: center;
    justify-content: center;
    width: 25px;
    border: 1px solid #777;
    background: #4c4c4c;
`;

const TaskbarRow = styled.div`
    display: flex;
    height: 38px;
    background: #1d2f39;
    color: #fff;
    font-size: 12px;
`;

const StartButton = styled.button`
    display: flex;
    align-items: center;
    justify-content: center;
    width: 45px;
`;

const SearchBox = styled.label`
    display: flex;
    align-items: center;
    gap: 10px;
    width: 322px;
    padding-left: 11px;
    background: #f2f2f2;
    color: #333;
    font-size: 13px;
`;

const SearchInput = styled.input`
    flex: 1;
    min-width: 0;
    padding: 0;
    border: none;
    background: none;
    &::placeholder {
        color: #444;
        opacity: 1;
    }
`;

const TaskButton = styled.button`
    display: flex;
    align-items: center;
    justify-content: center;
    width: 46px;
    background: ${({ $active }) => ($active ? "#45555e" : "none")};
    box-shadow: ${({ $running }) => ($running ? "inset 0 -2px #6fb4e2" : "none")};
`;

const LogoTile = styled.span`
    padding: 2px;
    background: #d8f0e0;
`;

const Tray = styled.div`
    flex: 1;
    display: flex;
    align-items: center;
    justify-content: flex-end;
    gap: 6px;
    padding-right: 14px;
    white-space: nowrap;
`;

const Weather = styled.button`
    display: flex;
    align-items: center;
    gap: 8px;
    margin-right: 14px;
`;

const WeatherBadge = styled.span`
    position: relative;
    i {
        position: absolute;
        top: 0;
        right: 3px;
        font-size: 9px;
        font-style: normal;
        line-height: 12px;
    }
`;

const TrayButton = styled.button`
    display: flex;
    justify-content: center;
    width: 17px;
`;

const TrayText = styled.div`
    display: flex;
    flex-direction: column;
    font-size: 11px;
    line-height: 16px;
    text-align: center;
`;

const Notice = styled.button`
    position: relative;
    margin-left: 10px;
    padding-right: 8px;
    i {
        position: absolute;
        right: 0;
        bottom: -7px;
        width: 15px;
        height: 15px;
        border: 1px solid #aaa;
        border-radius: 50%;
        background: #2b3a44;
        font-size: 10px;
        font-style: normal;
        line-height: 13px;
    }
`;
